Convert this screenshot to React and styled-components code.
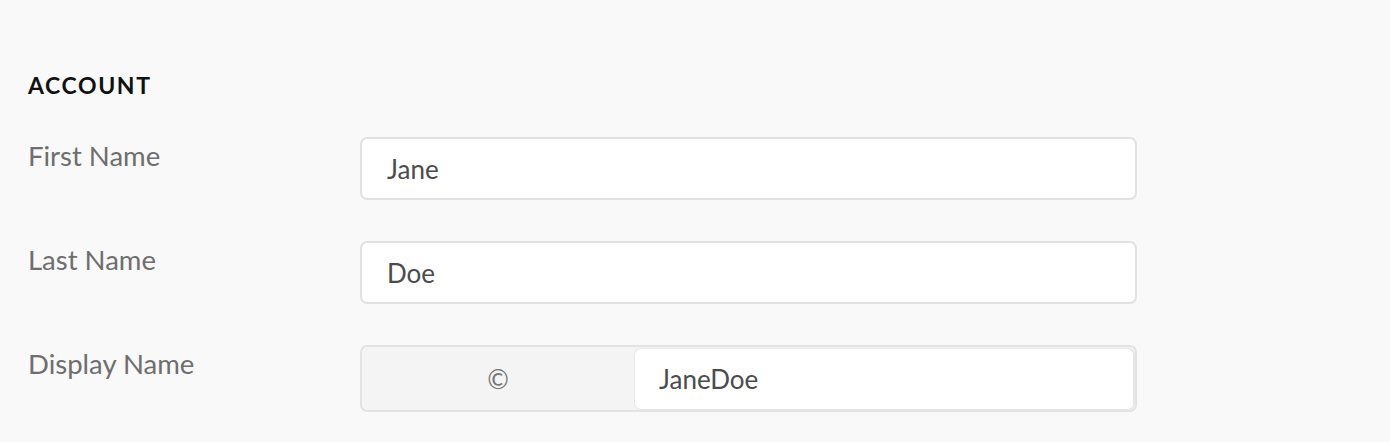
import React from "react";
import styled, { createGlobalStyle } from "styled-components";

const GlobalStyle = createGlobalStyle`
  body {
    margin: 0;
    background: #f9f9f9;
    font-family: Lato, "Open Sans", sans-serif;
  }
`;

const Page = styled.div`
  padding: 71px 28px 0 28px;
  width: 1109px;
`;

const Heading = styled.h2`
  margin: 0 0 38px 0;
  font-size: 23px;
  font-weight: 700;
  letter-spacing: 1.6px;
  color: #111;
  line-height: 28px;
`;

const Form = styled.div`
  display: flex;
  flex-direction: column;
  gap: 41px;
`;

const Row = styled.div`
  display: grid;
  grid-template-columns: 332px 777px;
  align-items: start;
`;

const Label = styled.label`
  font-size: 27.5px;
  color: #6e6e6e;
  line-height: 38px;
`;

const Input = styled.div`
  height: 63px;
  box-sizing: border-box;
  border: 2px solid #e1e1e1;
  border-radius: 7px;
  background: #fff;
  display: flex;
  align-items: center;
  padding-left: 25px;
  font-size: 26px;
  color: #4b4b4b;
`;

const Group = styled.div`
  height: 67px;
  box-sizing: border-box;
  border: 2px solid #e3e3e3;
  border-radius: 7px;
  background: #f4f4f4;
  display: grid;
  grid-template-columns: 272px 1fr;
`;

const Addon = styled.div`
  display: flex;
  align-items: center;
  justify-content: center;
  font-size: 26px;
  color: #777;
`;

const Inner = styled.div`
  margin: 1px 0 0 0;
  box-sizing: border-box;
  border: 1px solid #e6e6e6;
  border-right-width: 2px;
  border-radius: 7px;
  background: #fff;
  display: flex;
  align-items: center;
  padding-left: 24px;
  font-size: 26px;
  color: #4b4b4b;
`;

export default function App() {
  return (
    <>
      <GlobalStyle />
      <Page>
        <Heading>ACCOUNT</Heading>
        <Form>
          <Row>
            <Label>First Name</Label>
            <Input>Jane</Input>
          </Row>
          <Row>
            <Label>Last Name</Label>
            <Input>Doe</Input>
          </Row>
          <Row>
            <Label>Display Name</Label>
            <Group>
              <Addon>©</Addon>
              <Inner>JaneDoe</Inner>
            </Group>
          </Row>
        </Form>
      </Page>
    </>
  );
}
